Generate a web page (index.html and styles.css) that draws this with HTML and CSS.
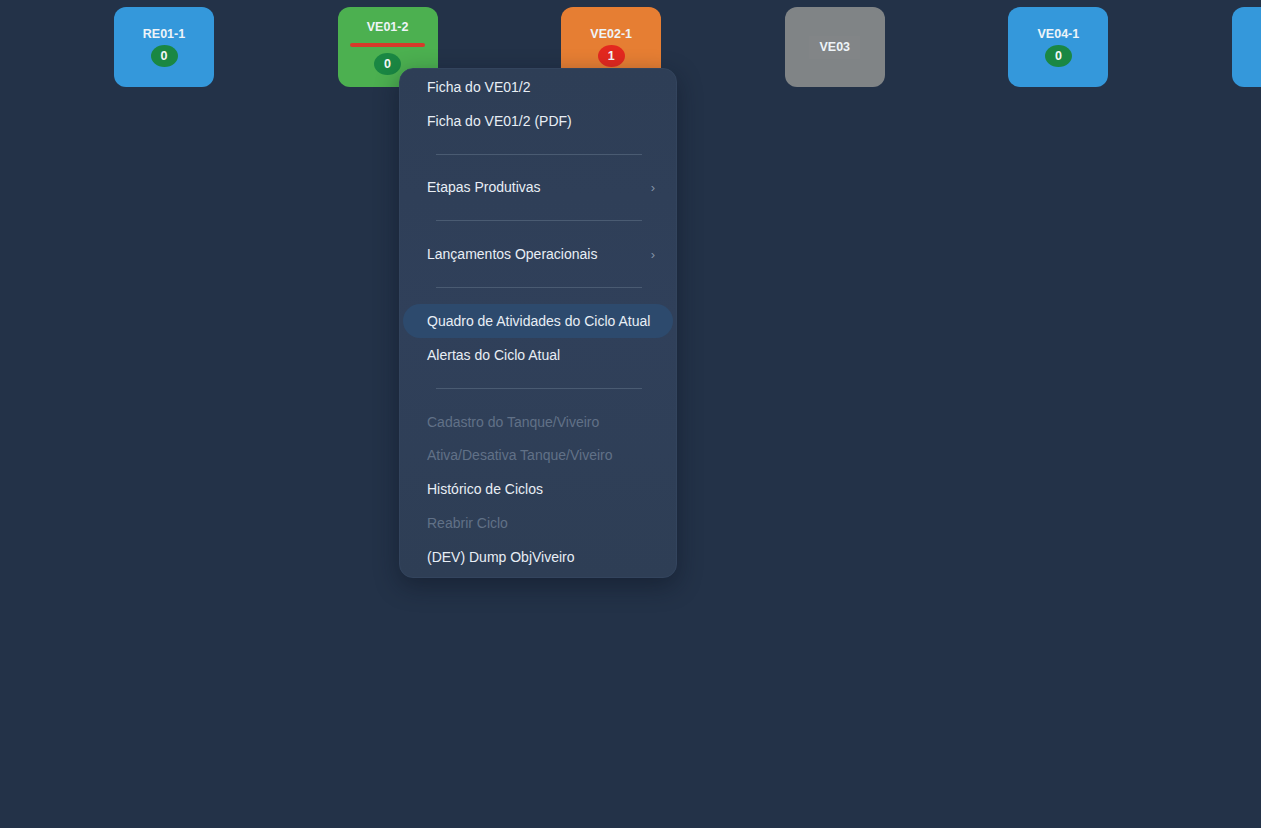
FILE: index.html
```html
<!DOCTYPE html>
<html lang="pt">
<head>
<meta charset="utf-8">
<title>Viveiros</title>
<link rel="stylesheet" href="styles.css">
</head>
<body>
<div class="row">
  <div class="tile blue"><div class="label">RE01-1</div><div class="badge ok">0</div></div>
  <div class="tile green"><div class="label">VE01-2</div><div class="bar"></div><div class="badge ok">0</div></div>
  <div class="tile orange"><div class="label">VE02-1</div><div class="badge alert">1</div></div>
  <div class="tile gray"><div class="label boxed">VE03</div></div>
  <div class="tile blue"><div class="label">VE04-1</div><div class="badge ok">0</div></div>
  <div class="tile blue"></div>
</div>

<div class="menu">
  <div class="item">Ficha do VE01/2</div>
  <div class="item">Ficha do VE01/2 (PDF)</div>
  <div class="sep"></div>
  <div class="item sub">Etapas Produtivas<span class="chev">›</span></div>
  <div class="sep"></div>
  <div class="item sub">Lançamentos Operacionais<span class="chev">›</span></div>
  <div class="sep"></div>
  <div class="item active">Quadro de Atividades do Ciclo Atual</div>
  <div class="item">Alertas do Ciclo Atual</div>
  <div class="sep"></div>
  <div class="item disabled">Cadastro do Tanque/Viveiro</div>
  <div class="item disabled">Ativa/Desativa Tanque/Viveiro</div>
  <div class="item">Histórico de Ciclos</div>
  <div class="item disabled">Reabrir Ciclo</div>
  <div class="item">(DEV) Dump ObjViveiro</div>
</div>
</body>
</html>
```

FILE: styles.css
```css
html, body {
  margin: 0;
  padding: 0;
  height: 100%;
}
body {
  background: #233248;
  font-family: "Liberation Sans", Arial, sans-serif;
  overflow: hidden;
  width: 1261px;
  height: 828px;
  position: relative;
}
.row {
  display: flex;
  gap: 123.6px;
  padding: 7px 0 0 114px;
  width: max-content;
}
.tile {
  width: 100px;
  height: 80px;
  flex: none;
  border-radius: 12px;
  display: flex;
  flex-direction: column;
  align-items: center;
  justify-content: center;
  box-sizing: border-box;
}
.blue { background: #3498db; }
.green { background: #4cb050; }
.orange { background: #e67e33; }
.gray { background: #808486; }
.label {
  color: #eef4f8;
  font-weight: bold;
  font-size: 12.5px;
  line-height: 15px;
}
.boxed {
  padding: 4px 10px;
  background: rgba(255,255,255,0.015);
}
.bar {
  width: 75px;
  height: 4px;
  background: #d63a2a;
  border-radius: 2px;
  margin: 8px 0 3px;
}
.badge {
  margin-top: 3px;
  width: 27px;
  height: 22px;
  border-radius: 50%;
  color: #f4f7f8;
  font-weight: bold;
  font-size: 12.5px;
  line-height: 22px;
  text-align: center;
}
.ok { background: #1a8743; }
.alert { background: #e3281f; }

.menu {
  position: absolute;
  left: 399px;
  top: 68px;
  width: 278px;
  box-sizing: border-box;
  padding: 1px 3px 3px;
  background: linear-gradient(180deg, #2e3e56 0%, #30405a 50%, #2e3e55 100%);
  border: 1px solid #33445d;
  border-radius: 14px;
  box-shadow: 0 8px 24px rgba(10, 18, 30, 0.45);
}
.item {
  height: 33.8px;
  display: flex;
  align-items: center;
  padding-left: 24px;
  padding-right: 18px;
  color: #e8eef5;
  font-size: 14px;
  border-radius: 17px;
}
.item.sub {
  justify-content: space-between;
}
.chev {
  color: #8391a6;
  font-size: 13px;
}
.item.active {
  background: #2d4a6d;
}
.item.disabled {
  color: #617187;
}
.sep {
  height: 33px;
  display: flex;
  align-items: center;
  justify-content: center;
}
.sep::before {
  content: "";
  display: block;
  width: 206px;
  height: 1px;
  background: #4a5b72;
  margin-left: 2px;
}
```
